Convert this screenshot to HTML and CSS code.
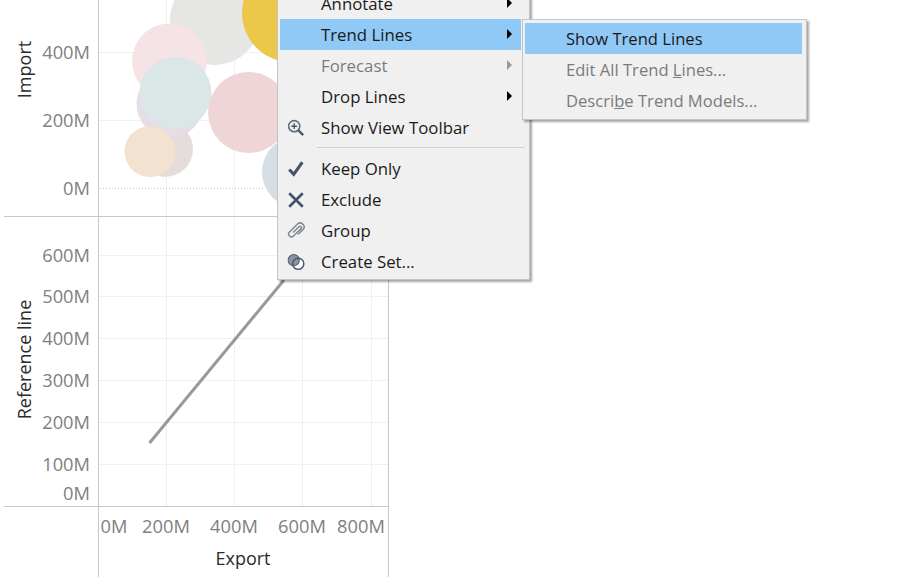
FILE: index.html
```html
<!DOCTYPE html>
<html lang="en">
<head>
    <meta charset="UTF-8">
    <title>Trend Lines menu</title>
    <link rel="stylesheet" href="styles.css">
</head>
<body>
    <svg class="chart" width="923" height="579" viewBox="0 0 923 579">
        <!-- top pane grid -->
        <g class="grid">
            <path d="M99 52.5H277M99 120.5H277"/>
            <path d="M166.5 0V216M234.5 0V216"/>
            <path d="M99 255.5H388M99 296.5H388M99 338.5H388M99 380.5H388M99 422.5H388M99 464.5H388"/>
            <path d="M166.5 217V506M234.5 217V506M302.5 280V506M371.5 280V506"/>
        </g>
        <path class="zero" d="M100 188.5H265"/>

        <circle cx="215" cy="20" r="45" fill="#e6e6e4"/>
        <circle cx="291" cy="13" r="49" fill="#ebc84a"/>
        <circle cx="169.5" cy="61" r="37.5" fill="#f5e3e6"/>
        <circle cx="165" cy="149" r="28" fill="#e3dcdb"/>
        <circle cx="170" cy="104" r="33.5" fill="#e6dde6"/>
        <circle cx="175.5" cy="93" r="36" fill="#dbe6e6"/>
        <circle cx="150" cy="151.5" r="25.5" fill="#f4e2d0"/>
        <circle cx="248.5" cy="112.5" r="40.5" fill="#f0d5d8"/>
        <circle cx="298" cy="172" r="36" fill="#d5dee5"/>

        <path class="axis" d="M98.5 0V577M388.5 217V577M4 216.5H388M4 506.5H388"/>
        <path class="trend" d="M149.5 443L284 280"/>

        <g class="tick" text-anchor="end">
            <text x="90" y="59">400M</text>
            <text x="90" y="127">200M</text>
            <text x="90" y="195">0M</text>
            <text x="90" y="262">600M</text>
            <text x="90" y="303">500M</text>
            <text x="90" y="345">400M</text>
            <text x="90" y="387">300M</text>
            <text x="90" y="429">200M</text>
            <text x="90" y="471">100M</text>
            <text x="90" y="500">0M</text>
        </g>
        <g class="tick" text-anchor="middle">
            <text x="114" y="533">0M</text>
            <text x="166" y="533">200M</text>
            <text x="234" y="533">400M</text>
            <text x="302" y="533">600M</text>
            <text x="361" y="533">800M</text>
        </g>
        <g class="label" text-anchor="middle">
            <text transform="translate(31 69.5) rotate(-90)">Import</text>
            <text transform="translate(31 359.5) rotate(-90)">Reference line</text>
            <text x="243" y="565">Export</text>
        </g>
    </svg>

    <div class="menu main-menu">
        <div class="row"><span>Annotate</span><i class="arrow"></i></div>
        <div class="row active"><span>Trend Lines</span><i class="arrow"></i></div>
        <div class="row off"><span>Forecast</span><i class="arrow"></i></div>
        <div class="row"><span>Drop Lines</span><i class="arrow"></i></div>
        <div class="row">
            <svg class="icon" viewBox="0 0 20 20"><circle cx="8" cy="8" r="6.2" fill="none" stroke="#5f6b7b" stroke-width="1.7"/><path d="M8 4.8V11.2M4.8 8H11.2" stroke="#46546a" stroke-width="1.5"/><path d="M12.5 12.5L18 18" stroke="#46546a" stroke-width="2.6"/></svg>
            <span>Show View Toolbar</span>
        </div>
        <div class="sep"></div>
        <div class="row">
            <svg class="icon" viewBox="0 0 20 20"><path d="M2.5 10.5L7.5 16L17 2.5" fill="none" stroke="#46546a" stroke-width="3.4"/></svg>
            <span>Keep Only</span>
        </div>
        <div class="row">
            <svg class="icon" viewBox="0 0 20 20"><path d="M2.5 2.5L17.5 17.5M17.5 2.5L2.5 17.5" stroke="#46546a" stroke-width="3"/></svg>
            <span>Exclude</span>
        </div>
        <div class="row">
            <svg class="icon clip" viewBox="0 0 20 20"><path d="M7 12.5L13 6.8C14.6 5.4 16.4 7.4 15 8.9L7.5 16C4.8 18.6 0.8 14.8 3.5 12L11.5 4C15 1 20 5.5 17.5 9L12 14.5" fill="none" stroke="#808894" stroke-width="1.5"/></svg>
            <span>Group</span>
        </div>
        <div class="row">
            <svg class="icon" viewBox="0 0 20 20"><circle cx="12.5" cy="12" r="6.2" fill="#fff"/><circle cx="7.5" cy="8" r="6.2" fill="#8a94a3" stroke="#5a6676" stroke-width="1.2"/><circle cx="12.5" cy="12" r="6.2" fill="none" stroke="#46546a" stroke-width="1.6"/></svg>
            <span>Create Set...</span>
        </div>
    </div>

    <div class="menu sub-menu">
        <div class="row active"><span>Show Trend Lines</span></div>
        <div class="row off"><span>Edit All Trend <u>L</u>ines...</span></div>
        <div class="row off"><span>Descri<u>b</u>e Trend Models...</span></div>
    </div>
</body>
</html>
```

FILE: styles.css
```css
html, body {
    margin: 0;
    height: 579px;
    overflow: hidden;
    background: #fff;
}
.chart {
    display: block;
}
.grid path {
    fill: none;
    stroke: #f0f0f0;
}
.zero {
    fill: none;
    stroke: #c4c4c4;
    stroke-dasharray: 1 2;
}
.axis {
    fill: none;
    stroke: #c8c8c8;
}
.trend {
    fill: none;
    stroke: #999;
    stroke-width: 3;
}
.tick text {
    font-family: "Open Sans", sans-serif;
    font-size: 18.3px;
    fill: #808080;
}
.label text {
    font-family: "Open Sans", sans-serif;
    font-size: 18px;
    font-weight: 500;
    fill: #2b2b2b;
}
.menu {
    position: absolute;
    box-sizing: border-box;
    background: #f0f0f0;
    border: 1px solid #c4c4c4;
    box-shadow: 2px 2px 2px rgba(0, 0, 0, 0.35);
    padding: 3px 8px 0 2px;
    font-family: "Open Sans", sans-serif;
    font-size: 16.8px;
    color: #1a1a1a;
}
.main-menu {
    left: 277px;
    top: -16px;
    width: 253px;
    height: 296px;
}
.sub-menu {
    left: 522px;
    top: 19px;
    width: 285px;
    height: 101px;
    padding-right: 4px;
    font-size: 16.6px;
}
.row {
    position: relative;
    display: flex;
    align-items: center;
    height: 31px;
    padding-left: 41px;
}
.active {
    background: #90c8f6;
}
.off {
    color: #7b7b7b;
}
.icon {
    position: absolute;
    left: 7px;
    top: 7px;
    width: 18px;
    height: 18px;
}
.clip {
    left: 6px;
    top: 5px;
    width: 20px;
    height: 20px;
}
.arrow {
    position: absolute;
    right: 9px;
    top: 10px;
    border-left: 5px solid #000;
    border-top: 5px solid transparent;
    border-bottom: 5px solid transparent;
}
.off .arrow {
    border-left-color: #9a9a9a;
}
.sep {
    height: 1px;
    margin: 4px -4px 5px 37px;
    background: #d0d0d0;
}
```
